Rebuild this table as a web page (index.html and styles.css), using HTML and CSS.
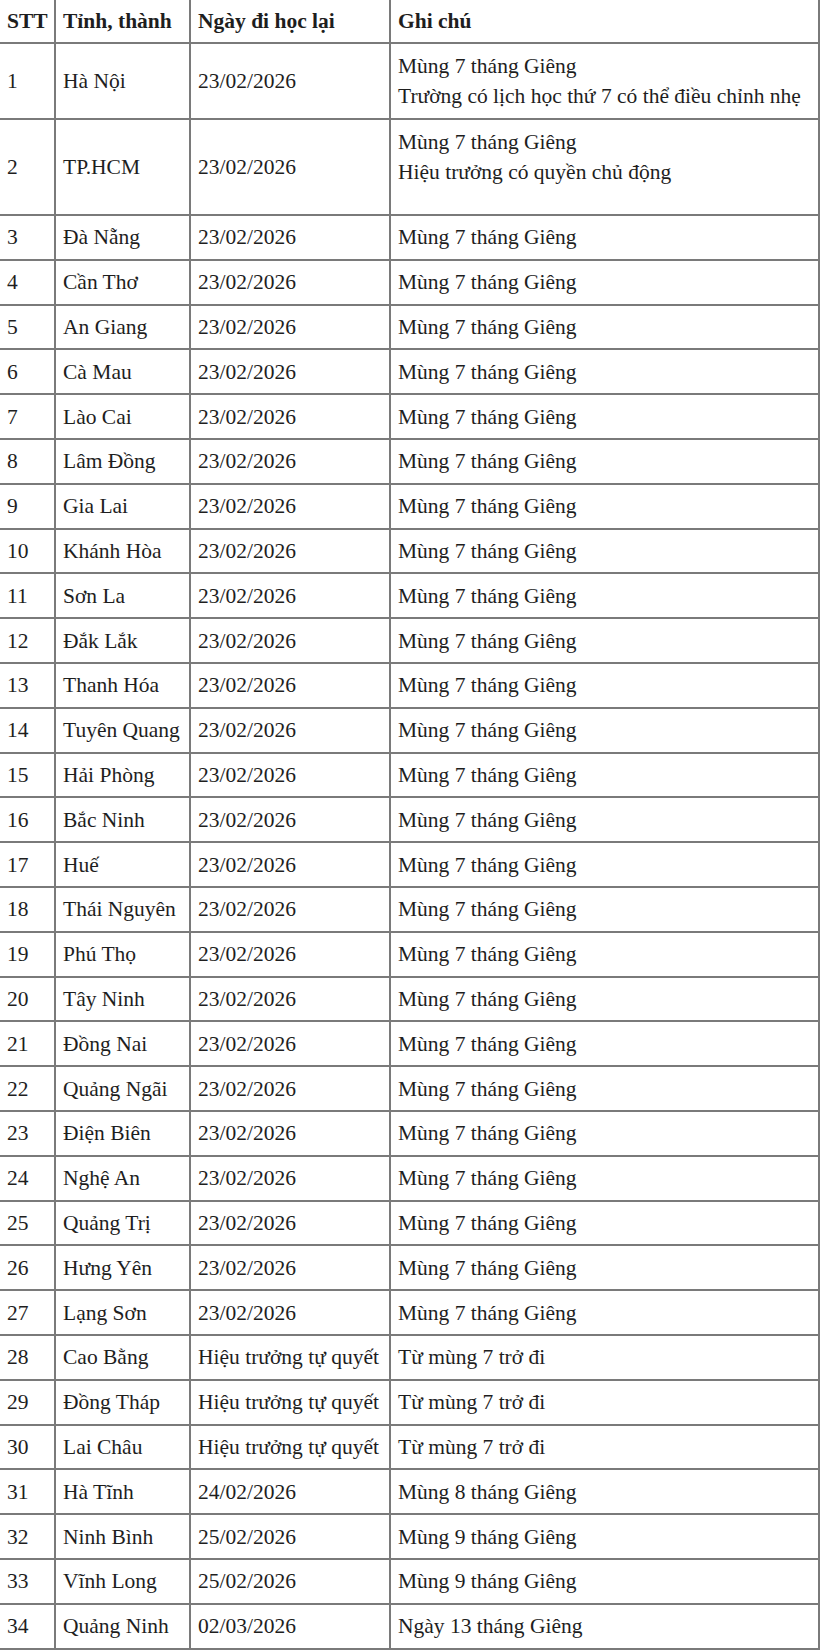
FILE: index.html
```html
<!DOCTYPE html>
<html lang="vi">
<head>
<meta charset="utf-8">
<title>Lịch đi học lại</title>
<link rel="stylesheet" href="styles.css">
</head>
<body>
<table class="schedule">
  <colgroup>
    <col class="c-stt"><col class="c-tinh"><col class="c-ngay"><col class="c-ghi">
  </colgroup>
  <thead>
    <tr class="head"><th>STT</th><th>Tỉnh, thành</th><th>Ngày đi học lại</th><th>Ghi chú</th></tr>
  </thead>
  <tbody>
    <tr class="tall"><td>1</td><td>Hà Nội</td><td>23/02/2026</td><td>Mùng 7 tháng Giêng<br>Trường có lịch học thứ 7 có thể điều chỉnh nhẹ</td></tr>
    <tr class="taller"><td>2</td><td>TP.HCM</td><td>23/02/2026</td><td class="extra">Mùng 7 tháng Giêng<br>Hiệu trưởng có quyền chủ động</td></tr>
    <tr><td>3</td><td>Đà Nẵng</td><td>23/02/2026</td><td>Mùng 7 tháng Giêng</td></tr>
    <tr><td>4</td><td>Cần Thơ</td><td>23/02/2026</td><td>Mùng 7 tháng Giêng</td></tr>
    <tr><td>5</td><td>An Giang</td><td>23/02/2026</td><td>Mùng 7 tháng Giêng</td></tr>
    <tr><td>6</td><td>Cà Mau</td><td>23/02/2026</td><td>Mùng 7 tháng Giêng</td></tr>
    <tr><td>7</td><td>Lào Cai</td><td>23/02/2026</td><td>Mùng 7 tháng Giêng</td></tr>
    <tr><td>8</td><td>Lâm Đồng</td><td>23/02/2026</td><td>Mùng 7 tháng Giêng</td></tr>
    <tr><td>9</td><td>Gia Lai</td><td>23/02/2026</td><td>Mùng 7 tháng Giêng</td></tr>
    <tr><td>10</td><td>Khánh Hòa</td><td>23/02/2026</td><td>Mùng 7 tháng Giêng</td></tr>
    <tr><td>11</td><td>Sơn La</td><td>23/02/2026</td><td>Mùng 7 tháng Giêng</td></tr>
    <tr><td>12</td><td>Đắk Lắk</td><td>23/02/2026</td><td>Mùng 7 tháng Giêng</td></tr>
    <tr><td>13</td><td>Thanh Hóa</td><td>23/02/2026</td><td>Mùng 7 tháng Giêng</td></tr>
    <tr><td>14</td><td>Tuyên Quang</td><td>23/02/2026</td><td>Mùng 7 tháng Giêng</td></tr>
    <tr><td>15</td><td>Hải Phòng</td><td>23/02/2026</td><td>Mùng 7 tháng Giêng</td></tr>
    <tr><td>16</td><td>Bắc Ninh</td><td>23/02/2026</td><td>Mùng 7 tháng Giêng</td></tr>
    <tr><td>17</td><td>Huế</td><td>23/02/2026</td><td>Mùng 7 tháng Giêng</td></tr>
    <tr><td>18</td><td>Thái Nguyên</td><td>23/02/2026</td><td>Mùng 7 tháng Giêng</td></tr>
    <tr><td>19</td><td>Phú Thọ</td><td>23/02/2026</td><td>Mùng 7 tháng Giêng</td></tr>
    <tr><td>20</td><td>Tây Ninh</td><td>23/02/2026</td><td>Mùng 7 tháng Giêng</td></tr>
    <tr><td>21</td><td>Đồng Nai</td><td>23/02/2026</td><td>Mùng 7 tháng Giêng</td></tr>
    <tr><td>22</td><td>Quảng Ngãi</td><td>23/02/2026</td><td>Mùng 7 tháng Giêng</td></tr>
    <tr><td>23</td><td>Điện Biên</td><td>23/02/2026</td><td>Mùng 7 tháng Giêng</td></tr>
    <tr><td>24</td><td>Nghệ An</td><td>23/02/2026</td><td>Mùng 7 tháng Giêng</td></tr>
    <tr><td>25</td><td>Quảng Trị</td><td>23/02/2026</td><td>Mùng 7 tháng Giêng</td></tr>
    <tr><td>26</td><td>Hưng Yên</td><td>23/02/2026</td><td>Mùng 7 tháng Giêng</td></tr>
    <tr><td>27</td><td>Lạng Sơn</td><td>23/02/2026</td><td>Mùng 7 tháng Giêng</td></tr>
    <tr><td>28</td><td>Cao Bằng</td><td>Hiệu trưởng tự quyết</td><td>Từ mùng 7 trở đi</td></tr>
    <tr><td>29</td><td>Đồng Tháp</td><td>Hiệu trưởng tự quyết</td><td>Từ mùng 7 trở đi</td></tr>
    <tr><td>30</td><td>Lai Châu</td><td>Hiệu trưởng tự quyết</td><td>Từ mùng 7 trở đi</td></tr>
    <tr><td>31</td><td>Hà Tĩnh</td><td>24/02/2026</td><td>Mùng 8 tháng Giêng</td></tr>
    <tr><td>32</td><td>Ninh Bình</td><td>25/02/2026</td><td>Mùng 9 tháng Giêng</td></tr>
    <tr><td>33</td><td>Vĩnh Long</td><td>25/02/2026</td><td>Mùng 9 tháng Giêng</td></tr>
    <tr><td>34</td><td>Quảng Ninh</td><td>02/03/2026</td><td>Ngày 13 tháng Giêng</td></tr>
  </tbody>
</table>
</body>
</html>
```

FILE: styles.css
```css
html, body {
  margin: 0;
  padding: 0;
  background: #ffffff;
}

.schedule {
  border-collapse: collapse;
  table-layout: fixed;
  width: 819px;
  font-family: "Liberation Serif", "Times New Roman", serif;
  font-size: 21.5px;
  line-height: 30px;
  color: #1e1e1e;
}

.c-stt { width: 55px; }
.c-tinh { width: 135px; }
.c-ngay { width: 200px; }
.c-ghi { width: 429px; }

.schedule th,
.schedule td {
  border: 2px solid #7a7a7a;
  padding: 0 0 0 7px;
  text-align: left;
  vertical-align: middle;
  white-space: nowrap;
  overflow: hidden;
}

.schedule th {
  font-weight: bold;
}

.schedule th:first-child,
.schedule td:first-child {
  border-left: none;
}

.schedule thead th {
  border-top: none;
}

.schedule tr { height: 44.8px; }
.schedule tr.head { height: 43px; }
.schedule tr.tall { height: 76px; }
.schedule tr.taller { height: 96px; }

.schedule td.extra {
  padding-bottom: 20px;
}
```
